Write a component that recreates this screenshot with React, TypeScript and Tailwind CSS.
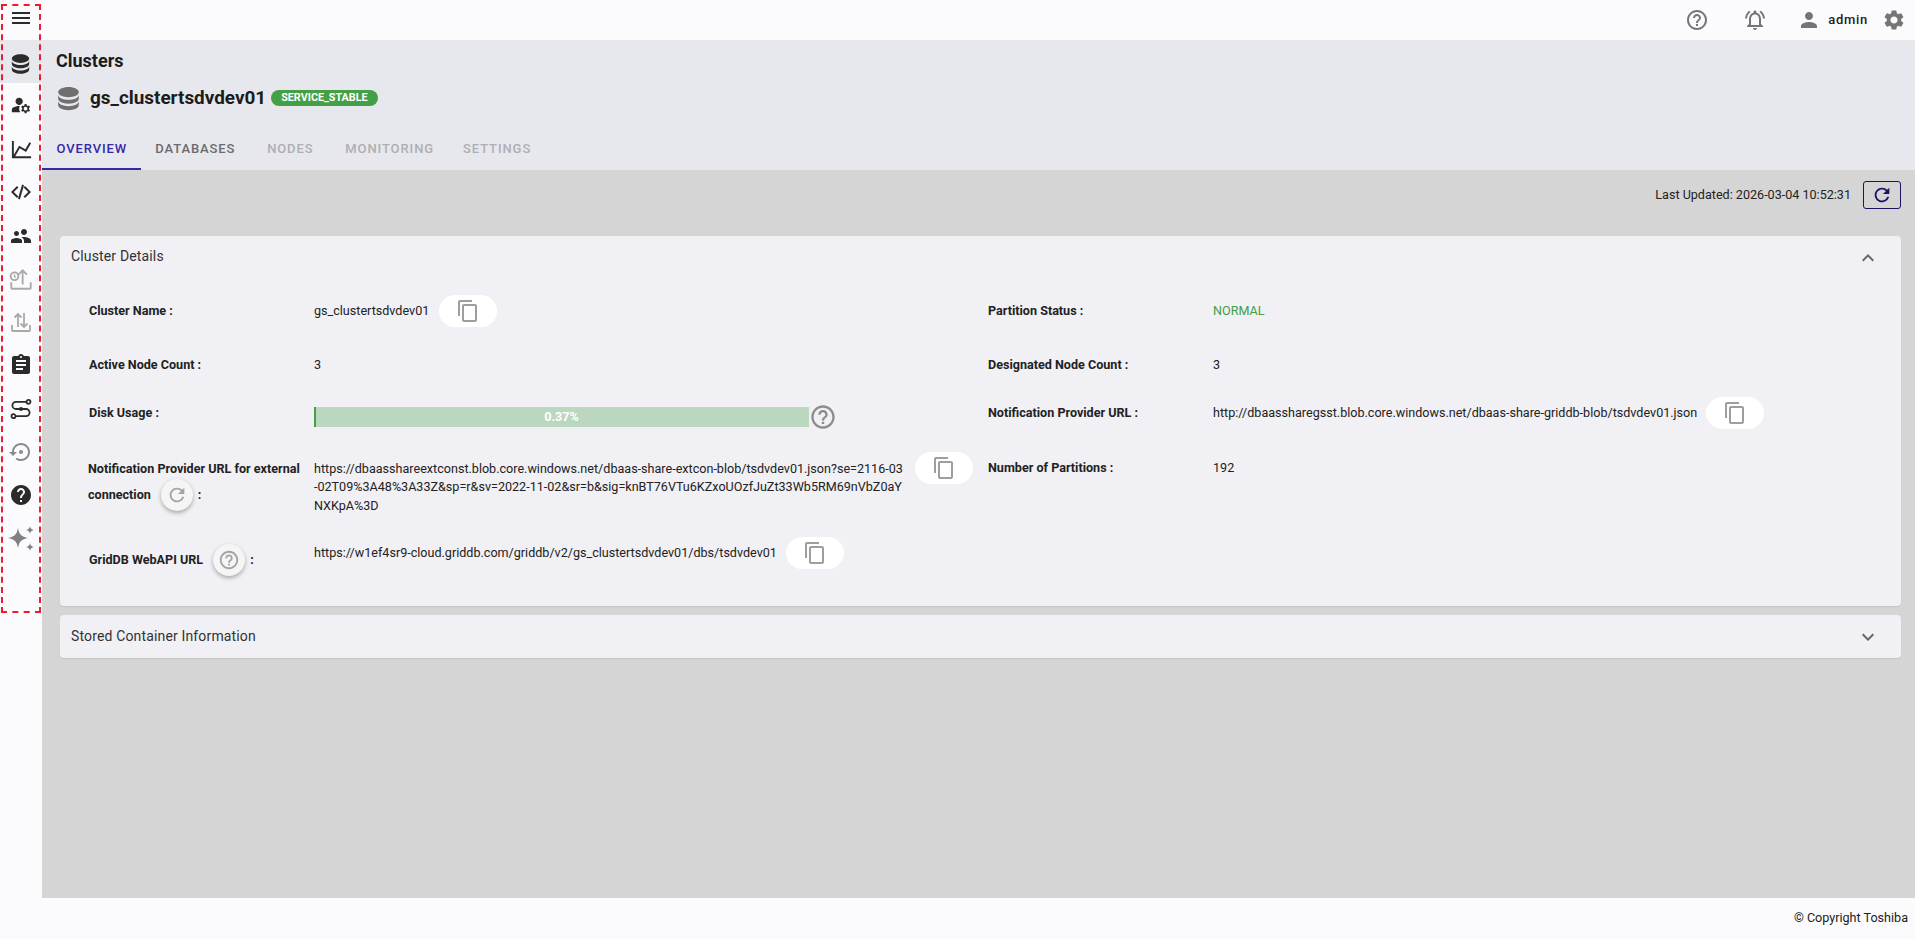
import type { ReactNode } from 'react'

const P = {
  menu: 'M3 18h18v-2H3v2zm0-5h18v-2H3v2zm0-7v2h18V6H3z',
  db: 'M12 3C7.58 3 4 4.79 4 7s3.58 4 8 4 8-1.79 8-4-3.58-4-8-4M4 9v3c0 2.21 3.58 4 8 4s8-1.79 8-4V9c0 2.21-3.58 4-8 4s-8-1.79-8-4m0 5v3c0 2.21 3.58 4 8 4s8-1.79 8-4v-3c0 2.21-3.58 4-8 4s-8-1.79-8-4z',
  manage: 'M10.67 13.02c-.22-.01-.44-.02-.67-.02-2.42 0-4.68.67-6.61 1.82-.88.52-1.39 1.5-1.39 2.53V20h9.26c-.79-1.13-1.26-2.51-1.26-4 0-1.07.25-2.07.67-2.98zM10 12c2.21 0 4-1.79 4-4s-1.79-4-4-4-4 1.79-4 4 1.79 4 4 4zM20.75 16c0-.22-.03-.42-.06-.63l1.14-1.01-1-1.73-1.45.49c-.32-.27-.68-.48-1.08-.63L18 11h-2l-.3 1.49c-.4.15-.76.36-1.08.63l-1.45-.49-1 1.73 1.14 1.01c-.03.21-.06.41-.06.63s.03.42.06.63l-1.14 1.01 1 1.73 1.45-.49c.32.27.68.48 1.08.63L16 21h2l.3-1.49c.4-.15.76-.36 1.08-.63l1.45.49 1-1.73-1.14-1.01c.03-.21.06-.41.06-.63zM17 18c-1.1 0-2-.9-2-2s.9-2 2-2 2 .9 2 2-.9 2-2 2z',
  chart: 'M16 11.78l4.24-7.33 1.73 1L16.74 14.5l-6.51-3.75L5.46 19H22v2H2V3h2v14.54L9.5 8z',
  code: 'M9.4 16.6 4.8 12l4.6-4.6L8 6l-6 6 6 6 1.4-1.4zm5.2 0 4.6-4.6-4.6-4.6L16 6l6 6-6 6-1.4-1.4zM10.9 19.4 9 18.8 13.1 4.6l1.9.6z',
  people: 'M16.5 12c1.38 0 2.49-1.12 2.49-2.5S17.88 7 16.5 7C15.12 7 14 8.12 14 9.5s1.12 2.5 2.5 2.5zM9 11c1.66 0 2.99-1.34 2.99-3S10.66 5 9 5C7.34 5 6 6.34 6 8s1.34 3 3 3zm7.5 3c-1.83 0-5.5.92-5.5 2.75V19h11v-2.25c0-1.83-3.67-2.75-5.5-2.75zM9 13c-2.33 0-7 1.17-7 3.5V19h7v-2.25c0-.85.33-2.34 2.37-3.47C10.5 13.1 9.66 13 9 13z',
  assignment: 'M19 3h-4.18C14.4 1.84 13.3 1 12 1c-1.3 0-2.4.84-2.82 2H5c-1.1 0-2 .9-2 2v14c0 1.1.9 2 2 2h14c1.1 0 2-.9 2-2V5c0-1.1-.9-2-2-2zm-7 0c.55 0 1 .45 1 1s-.45 1-1 1-1-.45-1-1 .45-1 1-1zm2 14H7v-2h7v2zm3-4H7v-2h10v2zm0-4H7V7h10v2z',
  restore: 'M14 12c0-1.1-.9-2-2-2s-2 .9-2 2 .9 2 2 2 2-.9 2-2zm-2-9c-4.97 0-9 4.03-9 9H0l4 4 4-4H5c0-3.87 3.13-7 7-7s7 3.13 7 7-3.13 7-7 7c-1.51 0-2.91-.49-4.06-1.3l-1.42 1.44C8.04 20.3 9.94 21 12 21c4.97 0 9-4.03 9-9s-4.03-9-9-9z',
  help: 'M12 2C6.48 2 2 6.48 2 12s4.48 10 10 10 10-4.48 10-10S17.52 2 12 2zm1 17h-2v-2h2v2zm2.07-7.75l-.9.92C13.45 12.9 13 13.5 13 15h-2v-.5c0-1.1.45-2.1 1.17-2.83l1.24-1.26c.37-.36.59-.86.59-1.41 0-1.1-.9-2-2-2s-2 .9-2 2H8c0-2.21 1.79-4 4-4s4 1.79 4 4c0 .88-.36 1.68-.93 2.25z',
  helpOutline: 'M11 18h2v-2h-2v2zm1-16C6.48 2 2 6.48 2 12s4.48 10 10 10 10-4.48 10-10S17.52 2 12 2zm0 18c-4.41 0-8-3.59-8-8s3.59-8 8-8 8 3.59 8 8-3.59 8-8 8zm0-14c-2.21 0-4 1.79-4 4h2c0-1.1.9-2 2-2s2 .9 2 2c0 2-3 1.75-3 5h2c0-2.25 3-2.5 3-5 0-2.21-1.79-4-4-4z',
  bell: 'M7.58 4.08 6.15 2.65C3.75 4.48 2.17 7.3 2.03 10.5h2c.15-2.65 1.51-4.97 3.55-6.42zm12.39 6.42h2c-.15-3.2-1.73-6.02-4.12-7.85l-1.42 1.43c2.02 1.45 3.39 3.77 3.54 6.42zM18 11c0-3.07-1.64-5.64-4.5-6.32V4c0-.83-.67-1.5-1.5-1.5s-1.5.67-1.5 1.5v.68C7.63 5.36 6 7.92 6 11v5l-2 2v1h16v-1l-2-2v-5zm-2 6H8v-6c0-2.48 1.51-4.5 4-4.5s4 2.02 4 4.5v6zm-4 5c.14 0 .27-.01.4-.04.65-.14 1.18-.58 1.44-1.18.1-.24.15-.5.15-.78h-4c.01 1.1.9 2 2.01 2z',
  person: 'M12 12c2.21 0 4-1.79 4-4s-1.79-4-4-4-4 1.79-4 4 1.79 4 4 4zm0 2c-2.67 0-8 1.34-8 4v2h16v-2c0-2.66-5.33-4-8-4z',
  gear: 'M19.14 12.94c.04-.3.06-.61.06-.94 0-.32-.02-.64-.07-.94l2.03-1.58c.18-.14.23-.41.12-.61l-1.92-3.32c-.12-.22-.37-.29-.59-.22l-2.39.96c-.5-.38-1.03-.7-1.62-.94l-.36-2.54c-.04-.24-.24-.41-.48-.41h-3.84c-.24 0-.43.17-.47.41l-.36 2.54c-.59.24-1.13.57-1.62.94l-2.39-.96c-.22-.08-.47 0-.59.22L2.74 8.87c-.12.21-.08.47.12.61l2.03 1.58c-.05.3-.09.63-.09.94s.02.64.07.94l-2.03 1.58c-.18.14-.23.41-.12.61l1.92 3.32c.12.22.37.29.59.22l2.39-.96c.5.38 1.03.7 1.62.94l.36 2.54c.05.24.24.41.48.41h3.84c.24 0 .44-.17.47-.41l.36-2.54c.59-.24 1.13-.56 1.62-.94l2.39.96c.22.08.47 0 .59-.22l1.92-3.32c.12-.22.07-.47-.12-.61l-2.01-1.58zM12 15.6c-1.98 0-3.6-1.62-3.6-3.6s1.62-3.6 3.6-3.6 3.6 1.62 3.6 3.6-1.62 3.6-3.6 3.6z',
  refresh: 'M17.65 6.35C16.2 4.9 14.21 4 12 4c-4.42 0-7.99 3.58-7.99 8s3.57 8 7.99 8c3.73 0 6.84-2.55 7.73-6h-2.08c-.82 2.33-3.04 4-5.65 4-3.31 0-6-2.69-6-6s2.69-6 6-6c1.66 0 3.14.69 4.22 1.78L13 11h7V4l-2.35 2.35z',
  copy: 'M16 1H4c-1.1 0-2 .9-2 2v14h2V3h12V1zm3 4H8c-1.1 0-2 .9-2 2v14c0 1.1.9 2 2 2h11c1.1 0 2-.9 2-2V7c0-1.1-.9-2-2-2zm0 16H8V7h11v14z',
  chevUp: 'M12 8l-6 6 1.41 1.41L12 10.83l4.59 4.58L18 14z',
  chevDown: 'M16.59 8.59 12 13.17 7.41 8.59 6 10l6 6 6-6z',
}

function Icon({ d, className }: { d: string; className: string }) {
  return (
    <svg viewBox="0 0 24 24" fill="currentColor" className={className}>
      <path d={d} />
    </svg>
  )
}

function SideItem({ children, active }: { children: ReactNode; active?: boolean }) {
  return <div className={`h-[43.4px] flex items-center justify-center ${active ? 'bg-[#e7e8ed]' : ''}`}>{children}</div>
}

function Sidebar() {
  return (
    <aside className="relative w-[42px] shrink-0 bg-[#fbfbfe] text-[#2b2b2b]">
      <div className="h-[40px] pb-[5px] flex items-center justify-center">
        <Icon d={P.menu} className="w-[24px] h-[24px]" />
      </div>
      <SideItem active><Icon d={P.db} className="w-[26px] h-[26px] translate-y-[2px] -translate-x-[0.5px]" /></SideItem>
      <SideItem><Icon d={P.manage} className="w-[22px] h-[22px]" /></SideItem>
      <SideItem><Icon d={P.chart} className="w-[23px] h-[23px] translate-y-[1px]" /></SideItem>
      <SideItem><Icon d={P.code} className="w-[24px] h-[24px]" /></SideItem>
      <SideItem><Icon d={P.people} className="w-[24px] h-[24px] -scale-x-100 translate-y-[1px]" /></SideItem>
      <SideItem>
        <svg viewBox="0 0 24 24" fill="none" stroke="#a9a9a9" strokeWidth="1.7" className="w-[26px] h-[26px]">
          <path d="M3 15v5.200c0 .5.4.8.8.8h16.400c.5 0 .8-.4.8-.8V15" />
          <path d="M13.500 17V4M9.500 8l4-4 4 4" />
          <circle cx="6" cy="9.500" r="3.600" fill="#fbfbfe" />
          <path d="M6 7.800v1.900l1.200.8" strokeWidth="1.2" />
        </svg>
      </SideItem>
      <SideItem>
        <svg viewBox="0 0 24 24" fill="none" stroke="#a9a9a9" strokeWidth="1.8" className="w-[24px] h-[24px]">
          <path d="M3 15v5.200c0 .5.4.8.8.8h16.400c.5 0 .8-.4.8-.8V15" />
          <path d="M9 17V4M5.500 7.500 9 4l3.500 3.500M15 3v14M11.500 13.500 15 17l3.500-3.500" />
        </svg>
      </SideItem>
      <SideItem><Icon d={P.assignment} className="w-[24px] h-[24px]" /></SideItem>
      <SideItem>
        <svg viewBox="0 0 24 24" fill="none" stroke="#2b2b2b" strokeWidth="1.8" className="w-[24px] h-[24px]">
          <circle cx="19.500" cy="4.800" r="2" />
          <circle cx="4.500" cy="19.200" r="2" />
          <path d="M17.500 4.800H7a3.600 3.600 0 0 0 0 7.200h10a3.600 3.600 0 0 1 0 7.200H6.500" />
          <circle cx="12" cy="12" r="2" fill="#2b2b2b" stroke="none" />
        </svg>
      </SideItem>
      <SideItem><Icon d={P.restore} className="w-[24px] h-[24px] text-[#8a8a8a]" /></SideItem>
      <SideItem><Icon d={P.help} className="w-[24px] h-[24px] -translate-y-[1px]" /></SideItem>
      <SideItem>
        <svg viewBox="0 0 28 28" fill="#808080" className="w-[28px] h-[28px]">
          <path d="M11 3c1.200 6.500 3.500 8.800 10 10-6.500 1.200-8.800 3.500-10 10-1.200-6.500-3.500-8.800-10-10 6.500-1.200 8.800-3.500 10-10z" />
          <path d="M23 1c.5 2.600 1.400 3.500 4 4-2.600.5-3.500 1.400-4 4-.5-2.600-1.400-3.500-4-4 2.600-.5 3.500-1.400 4-4z" />
          <path d="M23 18c.5 2.600 1.400 3.500 4 4-2.600.5-3.500 1.400-4 4-.5-2.600-1.400-3.500-4-4 2.600-.5 3.500-1.400 4-4z" />
        </svg>
      </SideItem>
      {/* dashed marker around the nav */}
      <div className="absolute left-[1px] top-[4px] w-[40px] h-[609px] border-2 border-dashed border-[#ee1c2e] pointer-events-none" />
    </aside>
  )
}

function CopyBtn({ className = '' }: { className?: string }) {
  return (
    <button className={`w-[58px] h-[32px] shrink-0 rounded-full bg-white flex items-center justify-center text-[#9e9e9e] ${className}`}>
      <Icon d={P.copy} className="w-[24px] h-[24px]" />
    </button>
  )
}

function RoundBtn({ d, className }: { d: string; className: string }) {
  return (
    <span className={`flex w-[32px] h-[32px] -my-[3px] shrink-0 rounded-full bg-[#f5f5f5] shadow-[0_2px_4px_rgba(0,0,0,0.3)] items-center justify-center text-[#a3a3a3] ${className}`}>
      <Icon d={d} className="w-[22px] h-[22px]" />
    </span>
  )
}

function Label({ children }: { children: ReactNode }) {
  return <div className="w-[225px] shrink-0 font-bold text-[#222] pl-[29px] box-content">{children}</div>
}

function Row({ left, right, className }: { left: ReactNode; right: ReactNode; className: string }) {
  return (
    <div className={`grid grid-cols-[899px_1fr] ${className}`}>
      <div className="flex items-center">{left}</div>
      <div className="flex items-center">{right}</div>
    </div>
  )
}

function Details() {
  return (
    <div className="pt-[6px] text-[12.58px] leading-[18.4px] text-[#222]">
      <Row
        className="h-[56px]"
        left={<><Label>Cluster Name :</Label><span>gs_clustertsdvdev01</span><span className="w-[10px]" /><CopyBtn /></>}
        right={<><Label>Partition Status :</Label><span className="text-[#43a047]">NORMAL</span></>}
      />
      <Row
        className="h-[52px]"
        left={<><Label>Active Node Count :</Label><span>3</span></>}
        right={<><Label>Designated Node Count :</Label><span>3</span></>}
      />
      <Row
        className="h-[44px]"
        left={
          <>
            <Label>Disk Usage :</Label>
            <div className="relative w-[495px] h-[20px] mt-[8px] bg-[#bcd7c0]">
              <div className="h-full w-[0.37%] bg-[#43a047]" />
              <div className="absolute inset-0 flex items-center justify-center text-white font-bold">0.37%</div>
            </div>
            <Icon d={P.helpOutline} className="w-[28px] h-[28px] mt-[8px] text-[#8c8c8c]" />
          </>
        }
        right={
          <>
            <Label>Notification Provider URL :</Label>
            <span>http://dbaassharegsst.blob.core.windows.net/dbaas-share-griddb-blob/tsdvdev01.json</span>
            <span className="w-[9px]" />
            <CopyBtn />
          </>
        }
      />
      <div className="grid grid-cols-[899px_1fr] h-[83px] pt-[15px]">
        <div className="flex items-start">
          <div className="w-[225px] shrink-0 pl-[28px] box-content font-bold leading-[26px] pt-[6px]">
            <div className="whitespace-nowrap">Notification Provider URL for external</div>
            <div className="flex items-center h-[26px]">
              connection
              <RoundBtn d={P.refresh} className="ml-[10px]" />
              <span className="ml-[5px]">:</span>
            </div>
          </div>
          <div className="w-[592px] ml-[1px] shrink-0 pt-[10px] whitespace-nowrap">
            https://dbaasshareextconst.blob.core.windows.net/dbaas-share-extcon-blob/tsdvdev01.json?se=2116-03<br />
            -02T09%3A48%3A33Z&amp;sp=r&amp;sv=2022-11-02&amp;sr=b&amp;sig=knBT76VTu6KZxoUOzfJuZt33Wb5RM69nVbZ0aY<br />
            NXKpA%3D
          </div>
          <CopyBtn className="mt-[2px] ml-[9px]" />
        </div>
        <div className="flex items-start pt-[9px]">
          <Label>Number of Partitions :</Label>
          <span>192</span>
        </div>
      </div>
      <Row
        className="h-[70px]"
        left={
          <>
            <div className="w-[225px] shrink-0 pl-[29px] box-content font-bold mt-[14px] flex items-center">
              GridDB WebAPI URL
              <RoundBtn d={P.helpOutline} className="ml-[10px]" />
              <span className="ml-[5px]">:</span>
            </div>
            <span>https://w1ef4sr9-cloud.griddb.com/griddb/v2/gs_clustertsdvdev01/dbs/tsdvdev01</span>
            <span className="w-[9px]" />
            <CopyBtn />
          </>
        }
        right={null}
      />
    </div>
  )
}

const tabs = [
  { name: 'OVERVIEW', cls: 'pl-[14.5px] pr-[13.5px] text-[#3629a8] border-[#3629a8]' },
  { name: 'DATABASES', cls: 'px-[14.5px] text-[#6b6b6f] border-transparent' },
  { name: 'NODES', cls: 'px-[14.5px] text-[#aeaeb3] border-transparent min-w-[81px]' },
  { name: 'MONITORING', cls: 'px-[14.5px] text-[#aeaeb3] border-transparent' },
  { name: 'SETTINGS', cls: 'px-[14.5px] text-[#aeaeb3] border-transparent' },
]

export default function App() {
  return (
    <div className="h-[939px] w-full flex flex-col overflow-hidden bg-[#d5d5d5] font-['Roboto',sans-serif]">
      <div className="flex flex-1 min-h-0">
        <Sidebar />
        <main className="flex-1 min-w-0 flex flex-col">
          <header className="h-[40px] shrink-0 bg-[#fbfbfe] flex items-center justify-end text-[#757575]">
            <Icon d={P.helpOutline} className="w-[24px] h-[24px]" />
            <Icon d={P.bell} className="w-[24px] h-[24px] ml-[34px]" />
            <Icon d={P.person} className="w-[24px] h-[24px] ml-[30px]" />
            <span className="ml-[7px] text-[13px] font-medium tracking-[0.7px] text-[#222]">admin</span>
            <Icon d={P.gear} className="w-[24px] h-[24px] ml-[14px] mr-[9px]" />
          </header>
          <section className="h-[130px] shrink-0 bg-[#e7e8ed]">
            <h1 className="pl-[14px] pt-[11px] text-[18px] leading-[20px] font-bold text-[#1c1c1c]">Clusters</h1>
            <div className="flex items-center pl-[14px] mt-[14px] h-[26px]">
              <Icon d={P.db} className="w-[31px] h-[31px] text-[#6f6f6f] -ml-[3px]" />
              <span className="ml-[6px] text-[18.9px] font-bold text-[#1c1c1c]">gs_clustertsdvdev01</span>
              <span className="ml-[5px] h-[16px] px-[10px] rounded-full bg-[#43a047] text-white text-[10.8px] leading-[16px] font-bold">SERVICE_STABLE</span>
            </div>
            <nav className="flex mt-[19px] h-[40px]">
              {tabs.map((t) => (
                <div key={t.name} className={`h-[40px] flex items-center justify-center text-[13px] font-medium tracking-[0.9px] border-b-2 ${t.cls}`}>
                  {t.name}
                </div>
              ))}
            </nav>
          </section>
          <div className="flex-1 min-h-0 pl-[18px] pr-[14px]">
            <div className="h-[66px] flex items-start justify-end pt-[11px]">
              <span className="text-[12.58px] leading-[16px] mt-[6px] text-[#222]">Last Updated: 2026-03-04 10:52:31</span>
              <button className="ml-[12px] w-[38px] h-[28px] rounded-[3px] border border-[#1a1464] flex items-center justify-center text-[#1a1464]">
                <Icon d={P.refresh} className="w-[22px] h-[22px]" />
              </button>
            </div>
            <div className="rounded-[4px] bg-[#f0f0f5] h-[370px] shadow-[0_1px_1px_rgba(0,0,0,0.08)]">
              <div className="h-[41px] flex items-center justify-between pl-[11px] pr-[21px]">
                <span className="text-[14px] tracking-[0.15px] text-[#333]">Cluster Details</span>
                <Icon d={P.chevUp} className="w-[24px] h-[24px] mt-[2px] text-[#666]" />
              </div>
              <Details />
            </div>
            <div className="mt-[9px] rounded-[4px] bg-[#f0f0f5] h-[43px] flex items-center justify-between pl-[11px] pr-[21px] shadow-[0_1px_1px_rgba(0,0,0,0.08)]">
              <span className="text-[14px] tracking-[0.15px] text-[#333]">Stored Container Information</span>
              <Icon d={P.chevDown} className="w-[24px] h-[24px] text-[#666]" />
            </div>
          </div>
        </main>
      </div>
      <footer className="h-[41px] shrink-0 bg-[#fbfbfe] flex items-center justify-end pr-[7px] text-[12.58px] text-[#222]">
        © Copyright Toshiba
      </footer>
    </div>
  )
}
